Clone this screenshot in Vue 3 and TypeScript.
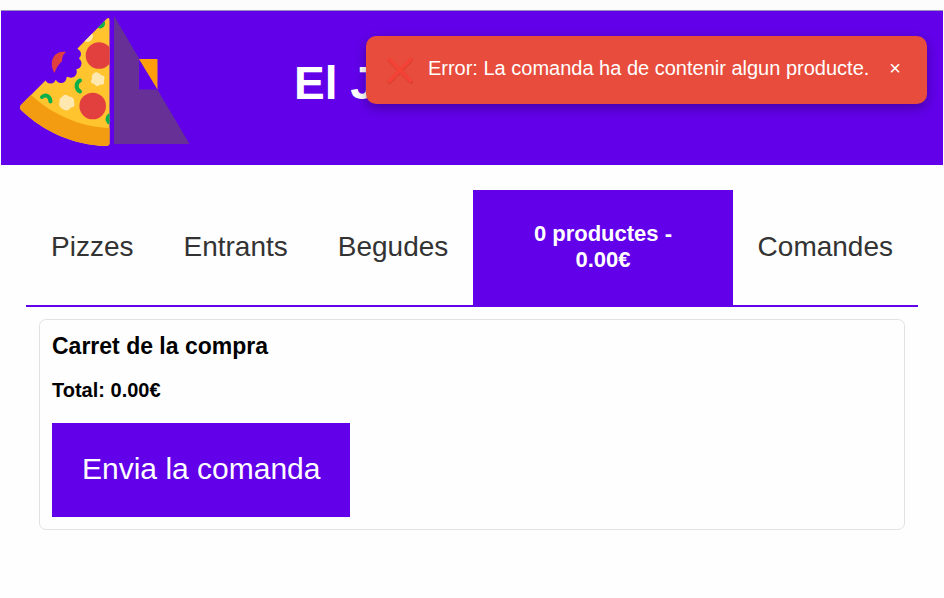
<script setup lang="ts">
import { computed, ref } from 'vue'

interface Product {
  name: string
  price: number
}

const categories: string[] = ['Pizzes', 'Entrants', 'Begudes']
const cart = ref<Product[]>([])
const errorVisible = ref(true)

const total = computed(() => cart.value.reduce((sum, item) => sum + item.price, 0).toFixed(2))

function sendOrder(): void {
  if (cart.value.length === 0) errorVisible.value = true
}
</script>

<template>
  <div class="page">
    <header class="banner">
      <svg class="logo" viewBox="18 14 174 134" aria-hidden="true">
        <defs>
          <clipPath id="slice">
            <path d="M21 105 L45 81 L78 48 L107 18.500 Q109.500 17 109.500 20 V143 Q109.500 146 106 146 C74 145 44 132 21 110 Q19 107.500 21 105Z" />
          </clipPath>
        </defs>
        <g clip-path="url(#slice)">
          <rect x="18" y="14" width="93" height="134" fill="#ffc42e" />
          <path d="M18 84 L31.500 95.500 C52 114 80 127.500 111 128 V148 H18Z" fill="#f39c12" />
          <circle cx="99" cy="55.500" r="13.300" fill="#e2403f" />
          <circle cx="92.700" cy="106" r="13.300" fill="#e2403f" />
          <circle cx="100" cy="23.500" r="5" fill="#0bb04b" />
          <circle cx="87" cy="36" r="6" fill="#ffe8b0" />
          <path d="M94 73 Q98 71 101 75 Q106 76 104 80 Q105 86 100 84.500 Q97 88 94 84 Q89 83 92 79 Q91 75 94 73Z" fill="#ffe8b0" />
          <path d="M62 97 Q65 93 69 96.500 Q75 97 74 102 Q76 107 71 107.500 Q67 113 62 108.500 Q58 106 59.500 102 Q59 98 62 97Z" fill="#ffe8b0" />
          <path d="M80 80.500 C75.500 83 75.500 89 80 91.500" fill="none" stroke="#0bb04b" stroke-width="4" stroke-linecap="round" />
          <path d="M42 97 C46 94 50 96 50.500 101.500" fill="none" stroke="#0bb04b" stroke-width="4" stroke-linecap="round" />
          <circle cx="111.500" cy="119" r="6" fill="#0bb04b" />
        </g>
        <g fill="#6200ea">
          <path d="M40 76 L44 50 L68 42 L78 49 L80 65 L72 75 L60 80 L46 80Z" />
          <circle cx="76" cy="54" r="5" />
          <circle cx="76" cy="63.500" r="5.500" />
          <circle cx="71" cy="72" r="5.800" />
          <circle cx="61" cy="77.500" r="5.500" />
          <circle cx="50.500" cy="78" r="5.500" />
        </g>
        <path d="M54.500 73 C48 62 54 50 66 52 C63 54 62 57 62 61 C59 64 56 68 54.500 73Z" fill="#e2403f" />
        <path d="M114 16 L189.500 144 H114Z" fill="#663096" />
        <path d="M139 59 L157.500 89.500 H139Z" fill="#6200ea" />
        <path d="M139 59 H157.500 V89.500Z" fill="#ff9d0a" />
      </svg>
      <h1 class="title">El J</h1>
    </header>

    <div v-if="errorVisible" class="toast" role="alert">
      <svg class="cross" viewBox="0 0 28 28" aria-hidden="true">
        <path d="M3.500 4 L25 26 M25 4 L3.500 26" fill="none" stroke="#d93f31" stroke-width="4" stroke-linecap="round" />
        <path d="M3.500 3.500 L24.500 25 M24.500 3.500 L3.500 25" fill="none" stroke="#f44336" stroke-width="3.500" stroke-linecap="round" />
      </svg>
      <span>Error: La comanda ha de contenir algun producte.</span>
      <button class="close" type="button" @click="errorVisible = false">×</button>
    </div>

    <main class="content">
      <nav class="tabs">
        <a v-for="category in categories" :key="category" class="tab" href="#">{{ category }}</a>
        <a class="tab active" href="#">{{ cart.length }} productes - {{ total }}€</a>
        <a class="tab" href="#">Comandes</a>
      </nav>

      <section class="cart">
        <h2 class="cart-title">Carret de la compra</h2>
        <p class="total">Total: {{ total }}€</p>
        <button class="send" type="button" @click="sendOrder">Envia la comanda</button>
      </section>
    </main>
  </div>
</template>

<style>
body {
  background: #fefefe;
}
</style>

<style scoped>
.page {
  font-family: "Liberation Sans", Arial, sans-serif;
  border-top: 10px solid #fcfcfc;
  color: #000;
}

.banner {
  display: flex;
  align-items: center;
  gap: 102px;
  margin: 0 1px;
  padding: 3px 17px 17px;
  background: #6200ea;
  border-top: 1px solid #9a8fc0;
}

.logo {
  flex: none;
  width: 174px;
  height: 134px;
}

.title {
  margin: 0;
  padding-top: 3px;
  color: #fff;
  font-size: 46px;
  line-height: 52px;
}

.toast {
  position: absolute;
  top: 36px;
  right: 17px;
  display: flex;
  align-items: flex-start;
  padding: 20px;
  border-radius: 10px;
  background: #e74c3c;
  box-shadow: 0 4px 12px rgba(0, 0, 0, 0.3);
  color: #fff;
  font-size: 20px;
  line-height: 24px;
}

.cross {
  width: 28px;
  height: 28px;
  margin-right: 14px;
}

.close {
  margin-left: 14px;
  padding: 0 6px;
  border: 0;
  background: none;
  color: #fff;
  font: inherit;
  cursor: pointer;
}

.content {
  margin: 25px 26px 0;
}

.tabs {
  display: flex;
  border-bottom: 2px solid #6200ea;
}

.tab {
  display: flex;
  box-sizing: border-box;
  align-items: center;
  justify-content: center;
  min-height: 115px;
  padding: 0 25px 2px;
  color: #333;
  font-size: 28px;
  line-height: 32px;
  text-decoration: none;
}

.active {
  flex: 1;
  padding: 0 50px 2px;
  background: #6200ea;
  color: #fff;
  font-size: 22px;
  font-weight: bold;
  line-height: 26px;
  text-align: center;
}

.cart {
  margin: 12px 13px;
  padding: 12px;
  border: 1px solid #e2e2e2;
  border-radius: 7px;
}

.cart-title {
  margin: 0 0 18px;
  font-size: 23px;
  line-height: 28px;
}

.total {
  margin: 0 0 21px;
  font-size: 20px;
  font-weight: bold;
  line-height: 24px;
}

.send {
  display: block;
  padding: 29px 30px 31px;
  border: 0;
  background: #6200ea;
  color: #fff;
  font-family: inherit;
  font-size: 30px;
  line-height: 34px;
  cursor: pointer;
}
</style>
